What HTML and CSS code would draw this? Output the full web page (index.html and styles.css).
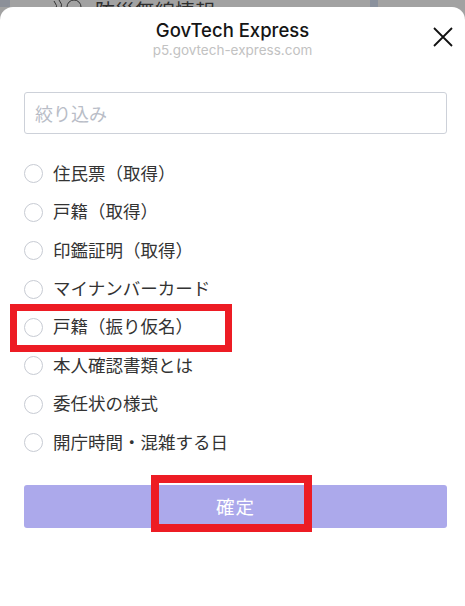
FILE: index.html
```html
<!DOCTYPE html>
<html lang="ja">
	<head>
		<meta charset="utf-8">
		<title>GovTech Express</title>
		<link rel="stylesheet" href="styles.css">
	</head>
	<body>

		<div class="behind">
			<div class="sideCol"></div>
			<div class="behindMain">
				<svg class="behindIcon" width="32" height="20" viewBox="0 0 32 20">
					<path d="M4 2 Q8 6 6 12" fill="none" stroke="#333" stroke-width="1"/>
					<path d="M9 1 Q13 5 11 10" fill="none" stroke="#333" stroke-width="1"/>
					<circle cx="24" cy="8" r="7" fill="none" stroke="#333" stroke-width="1"/>
				</svg>
				<span class="behindText">防災無線情報</span>
			</div>
			<div class="sideBar"></div>
			<div class="behindRest"></div>
		</div>

		<div class="sheet">

			<div class="header">
				<div class="title">GovTech Express</div>
				<div class="subtitle">p5.govtech-express.com</div>
				<svg class="close" width="20" height="20" viewBox="0 0 20 20">
					<path d="M1 1 L19 19 M19 1 L1 19" stroke="#111" stroke-width="1.8" fill="none"/>
				</svg>
			</div>

			<div class="content">
				<input class="filter" type="text" placeholder="絞り込み">

				<ul class="options">
					<li class="opt"><span class="radio"></span>住民票（取得）</li>
					<li class="opt"><span class="radio"></span>戸籍（取得）</li>
					<li class="opt"><span class="radio"></span>印鑑証明（取得）</li>
					<li class="opt"><span class="radio"></span>マイナンバーカード</li>
					<li class="opt"><span class="radio"></span>戸籍（振り仮名）<span class="mark markOpt"></span></li>
					<li class="opt"><span class="radio"></span>本人確認書類とは</li>
					<li class="opt"><span class="radio"></span>委任状の様式</li>
					<li class="opt"><span class="radio"></span>開庁時間・混雑する日</li>
				</ul>

				<div class="btConfirm">確定<span class="mark markBt"></span></div>
			</div>

		</div>

	</body>
</html>
```

FILE: styles.css
```css
body{
	margin: 0;
	padding: 0;
	width: 465px;
	height: 606px;
	overflow: hidden;
	background-color: #a2a2a2;
	font-family: "Noto Sans CJK JP", sans-serif;
}

/* page dimmed behind the sheet */
.behind{
	display: flex;
	height: 7px;
	overflow: hidden;
}

.sideCol{
	width: 10px;
	background-color: #8c9099;
}

.behindMain{
	width: 360px;
	display: flex;
	align-items: flex-end;
	background-color: #a2a2a2;
}

.behindIcon{
	margin-left: 40px;
	margin-bottom: -12px;
	flex-shrink: 0;
}

.behindText{
	margin-left: 13px;
	margin-bottom: -14px;
	font-size: 20px;
	line-height: 20px;
	color: #2e2e2e;
	white-space: nowrap;
}

.sideBar{
	width: 8px;
	background-color: #8a919d;
}

.behindRest{
	flex: 1;
	background-color: #a2a2a2;
}

/* sheet */
.sheet{
	height: 599px;
	background-color: #fff;
	border-radius: 13px 13px 0 0;
}

.header{
	position: relative;
	height: 60px;
	text-align: center;
}

.title{
	padding-top: 11px;
	font-family: Inter, "Noto Sans", sans-serif;
	font-weight: 500;
	font-size: 18.5px;
	line-height: 24px;
	color: #151515;
}

.subtitle{
	font-family: Inter, "Noto Sans", sans-serif;
	font-size: 13.5px;
	line-height: 17px;
	color: #c2c2c2;
}

.close{
	position: absolute;
	top: 20px;
	right: 12px;
}

.content{
	padding: 25px 18px 0 24px;
}

.filter{
	display: block;
	box-sizing: border-box;
	width: 423px;
	height: 42px;
	margin: 0;
	padding: 0 10px;
	border: 1px solid #cdd1d9;
	border-radius: 3px;
	font-family: "Noto Sans CJK JP", sans-serif;
	font-size: 18px;
	color: #333;
	outline: none;
}

.filter::placeholder{
	color: #b9bdc7;
}

.options{
	list-style: none;
	margin: 19px 0 0 0;
	padding: 0;
}

.opt{
	position: relative;
	display: flex;
	align-items: center;
	height: 38.45px;
	font-size: 17.5px;
	color: #333;
}

.radio{
	box-sizing: border-box;
	width: 19px;
	height: 19px;
	margin-top: 3px;
	margin-right: 10px;
	border: 1px solid #c7cbd3;
	border-radius: 50%;
}

.btConfirm{
	position: relative;
	display: flex;
	align-items: center;
	justify-content: center;
	width: 423px;
	height: 43px;
	margin-top: 24px;
	border-radius: 3px;
	background-color: #aca9eb;
	color: #fff;
	font-size: 18.5px;
	letter-spacing: 1px;
}

/* red annotation frames */
.mark{
	position: absolute;
	box-sizing: border-box;
	border: 7px solid #ed1c24;
}

.markOpt{
	left: -14px;
	top: -3px;
	width: 222px;
	height: 48px;
}

.markBt{
	left: 127px;
	top: -10px;
	width: 161px;
	height: 57px;
	border-width: 8px;
}
```
